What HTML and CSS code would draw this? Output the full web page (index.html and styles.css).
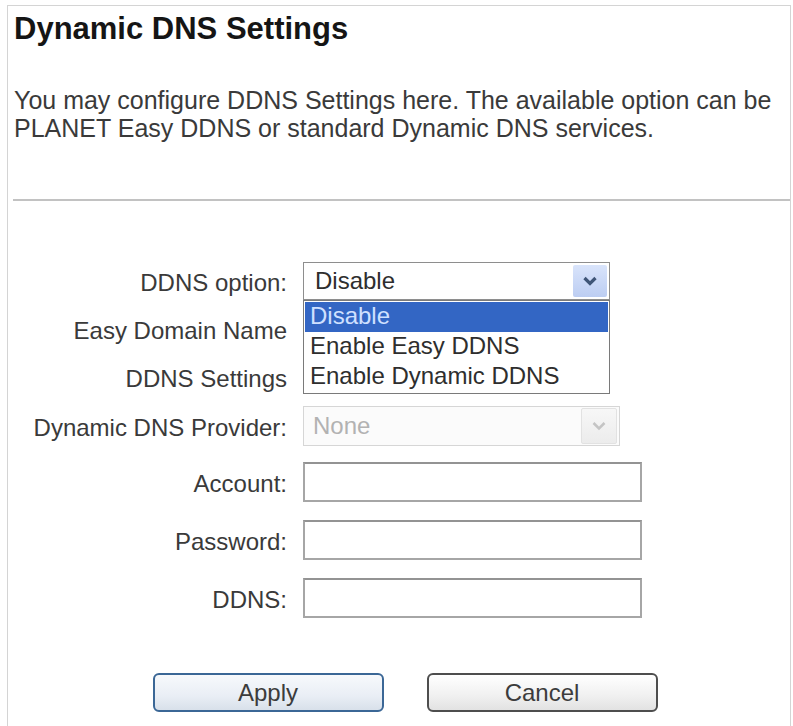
FILE: index.html
```html
<!DOCTYPE html>
<html lang="en">
<head>
    <meta charset="UTF-8">
    <title>Dynamic DNS Settings</title>
    <link rel="stylesheet" href="styles.css">
</head>
<body>
    <div class="frame">
        <div class="intro">
            <h1>Dynamic DNS Settings</h1>
            <p>You may configure DDNS Settings here. The available option can be PLANET Easy DDNS or standard Dynamic DNS services.</p>
        </div>
        <hr class="divider">
        <div class="form">
            <div class="group top">
                <div class="row">
                    <label>DDNS option:</label>
                    <div class="select open">
                        <span class="value">Disable</span>
                        <span class="arrow">
                            <svg width="16" height="10" viewBox="0 0 16 10"><path d="M2.5 2 L8 7.5 L13.5 2" fill="none" stroke="#3f5577" stroke-width="3.2"/></svg>
                        </span>
                        <ul class="options">
                            <li class="selected">Disable</li>
                            <li>Enable Easy DDNS</li>
                            <li>Enable Dynamic DDNS</li>
                        </ul>
                    </div>
                </div>
                <div class="row">
                    <label>Easy Domain Name</label>
                    <div></div>
                </div>
                <div class="row">
                    <label>DDNS Settings</label>
                    <div></div>
                </div>
                <div class="row tall">
                    <label>Dynamic DNS Provider:</label>
                    <div class="select disabled">
                        <span class="value">None</span>
                        <span class="arrow">
                            <svg width="16" height="10" viewBox="0 0 16 10"><path d="M2.5 2 L8 7.5 L13.5 2" fill="none" stroke="#c4c4c4" stroke-width="2.5"/></svg>
                        </span>
                    </div>
                </div>
            </div>
            <div class="group bottom">
                <div class="row tall">
                    <label>Account:</label>
                    <input type="text" class="field">
                </div>
                <div class="row tall">
                    <label>Password:</label>
                    <input type="password" class="field">
                </div>
                <div class="row tall">
                    <label>DDNS:</label>
                    <input type="text" class="field">
                </div>
            </div>
            <div class="buttons">
                <button class="btn apply">Apply</button>
                <button class="btn">Cancel</button>
            </div>
        </div>
    </div>
</body>
</html>
```
FILE: styles.css
```css
body {
    margin: 0;
    background-color: #fff;
    font-family: "Liberation Sans", Arial, sans-serif;
    color: #333;
}

.frame {
    margin: 5px 2px 0 7px;
    border: 1px solid #d4d4d4;
    border-bottom: none;
    height: 740px;
}

.intro {
    padding: 6px 0 0 6px;
}

h1 {
    margin: 0;
    font-size: 31px;
    line-height: 34px;
    font-weight: bold;
    color: #151515;
}

.intro p {
    margin: 40px 0 0 0;
    font-size: 25px;
    line-height: 28px;
    color: #3a3a3a;
}

.divider {
    margin: 57px 0 0 5px;
    height: 0;
    border: none;
    border-top: 2px solid #c2c2c2;
}

.form {
    padding-top: 61px;
}

.group {
    display: flex;
    flex-direction: column;
}

.group.top {
    gap: 10px;
}

.group.bottom {
    gap: 18px;
    margin-top: 16px;
}

.row {
    display: grid;
    grid-template-columns: 279px 1fr;
    column-gap: 16px;
    align-items: center;
    height: 38px;
}

.row.tall {
    height: 40px;
}

.row label {
    text-align: right;
    font-size: 24px;
    color: #3a3a3a;
    white-space: nowrap;
    padding-top: 3px;
}

.select {
    position: relative;
    box-sizing: border-box;
    width: 307px;
    height: 38px;
    border: 1px solid #8e8e8e;
    background-color: #fff;
    display: flex;
    align-items: center;
    font-size: 24px;
}

.select .value {
    flex: 1;
    padding-left: 11px;
    color: #2e2e2e;
}

.select .arrow {
    width: 34px;
    height: 32px;
    margin-right: 2px;
    display: flex;
    align-items: center;
    justify-content: center;
    background: linear-gradient(#d9e4fb, #bccdf2);
    border-radius: 2px;
}

.select.disabled {
    width: 317px;
    height: 40px;
    border-color: #d6d6d6;
    background-color: #fbfbfb;
}

.select.disabled .value {
    color: #b2b2b2;
    padding-left: 9px;
}

.select.disabled .arrow {
    height: 34px;
    background: linear-gradient(#f7f7f7, #ececec);
    border: 1px solid #e2e2e2;
}

.options {
    position: absolute;
    top: 37px;
    left: -1px;
    width: 307px;
    box-sizing: border-box;
    margin: 0;
    padding: 1px;
    list-style: none;
    background-color: #fff;
    border: 1px solid #7a7a7a;
    z-index: 2;
}

.options li {
    height: 30px;
    line-height: 28px;
    padding-left: 5px;
    color: #2e2e2e;
}

.options li.selected {
    background-color: #3366c4;
    color: #cfe0ff;
}

.field {
    box-sizing: border-box;
    width: 339px;
    height: 40px;
    margin: 0;
    border: 2px solid #a6a6a6;
    border-top-color: #939393;
    background-color: #fff;
}

.buttons {
    display: flex;
    justify-content: center;
    gap: 43px;
    margin-top: 55px;
    padding-left: 12px;
}

.btn {
    width: 231px;
    height: 39px;
    border: 2px solid #4e4e4e;
    border-radius: 6px;
    background: linear-gradient(#ffffff, #f0f0f0 60%, #e2e2e2);
    font-family: "Liberation Sans", Arial, sans-serif;
    font-size: 24px;
    color: #3c3c3c;
    padding: 0;
}

.btn.apply {
    border-color: #3b6796;
    background: linear-gradient(#f7f9fc, #e9eef5 60%, #d8e0ea);
}
```
